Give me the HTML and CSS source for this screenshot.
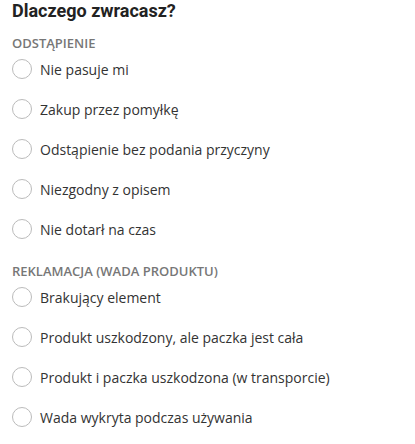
FILE: index.html
```html
<!DOCTYPE html>
<html lang="pl">
<head>
  <meta charset="UTF-8">
  <meta name="viewport" content="width=device-width, initial-scale=1.0">
  <title>Dlaczego zwracasz?</title>
  <link rel="stylesheet" href="styles.css">
</head>
<body>
  <div class="container">
    <h2 class="title">Dlaczego zwracasz?</h2>

    <div class="section">
      <p class="section-label">Odstąpienie</p>
      <label class="option"><input type="radio" name="reason"><span>Nie pasuje mi</span></label>
      <label class="option"><input type="radio" name="reason"><span>Zakup przez pomyłkę</span></label>
      <label class="option"><input type="radio" name="reason"><span>Odstąpienie bez podania przyczyny</span></label>
      <label class="option"><input type="radio" name="reason"><span>Niezgodny z opisem</span></label>
      <label class="option"><input type="radio" name="reason"><span>Nie dotarł na czas</span></label>
    </div>

    <div class="section">
      <p class="section-label">Reklamacja (wada produktu)</p>
      <label class="option"><input type="radio" name="reason"><span>Brakujący element</span></label>
      <label class="option"><input type="radio" name="reason"><span>Produkt uszkodzony, ale paczka jest cała</span></label>
      <label class="option"><input type="radio" name="reason"><span>Produkt i paczka uszkodzona (w transporcie)</span></label>
      <label class="option"><input type="radio" name="reason"><span>Wada wykryta podczas używania</span></label>
    </div>
  </div>
</body>
</html>
```

FILE: styles.css
```css
body {
  font-family: "Open Sans", Arial, sans-serif;
  background-color: #fff;
  color: #333;
  margin: 0;
  padding: 0;
}

.container {
  padding: 0 12px;
}

.title {
  font-family: Roboto, Arial, sans-serif;
  font-size: 18px;
  line-height: 22px;
  font-weight: 700;
  color: #222;
  margin: 0;
}

.section {
  display: flex;
  flex-direction: column;
  gap: 20px;
  margin-top: 13px;
}

.section + .section {
  margin-top: 24px;
}

.section-label {
  font-size: 13px;
  line-height: 16px;
  font-weight: 600;
  text-transform: uppercase;
  color: #777;
  margin: 0 0 -12px;
}

.option {
  display: flex;
  align-items: center;
  gap: 8px;
  height: 20px;
  font-size: 14px;
  cursor: pointer;
}

.option input[type="radio"] {
  appearance: none;
  width: 20px;
  height: 20px;
  margin: 0;
  border: 1px solid #bbb;
  border-radius: 50%;
  box-sizing: border-box;
  flex-shrink: 0;
}
```
